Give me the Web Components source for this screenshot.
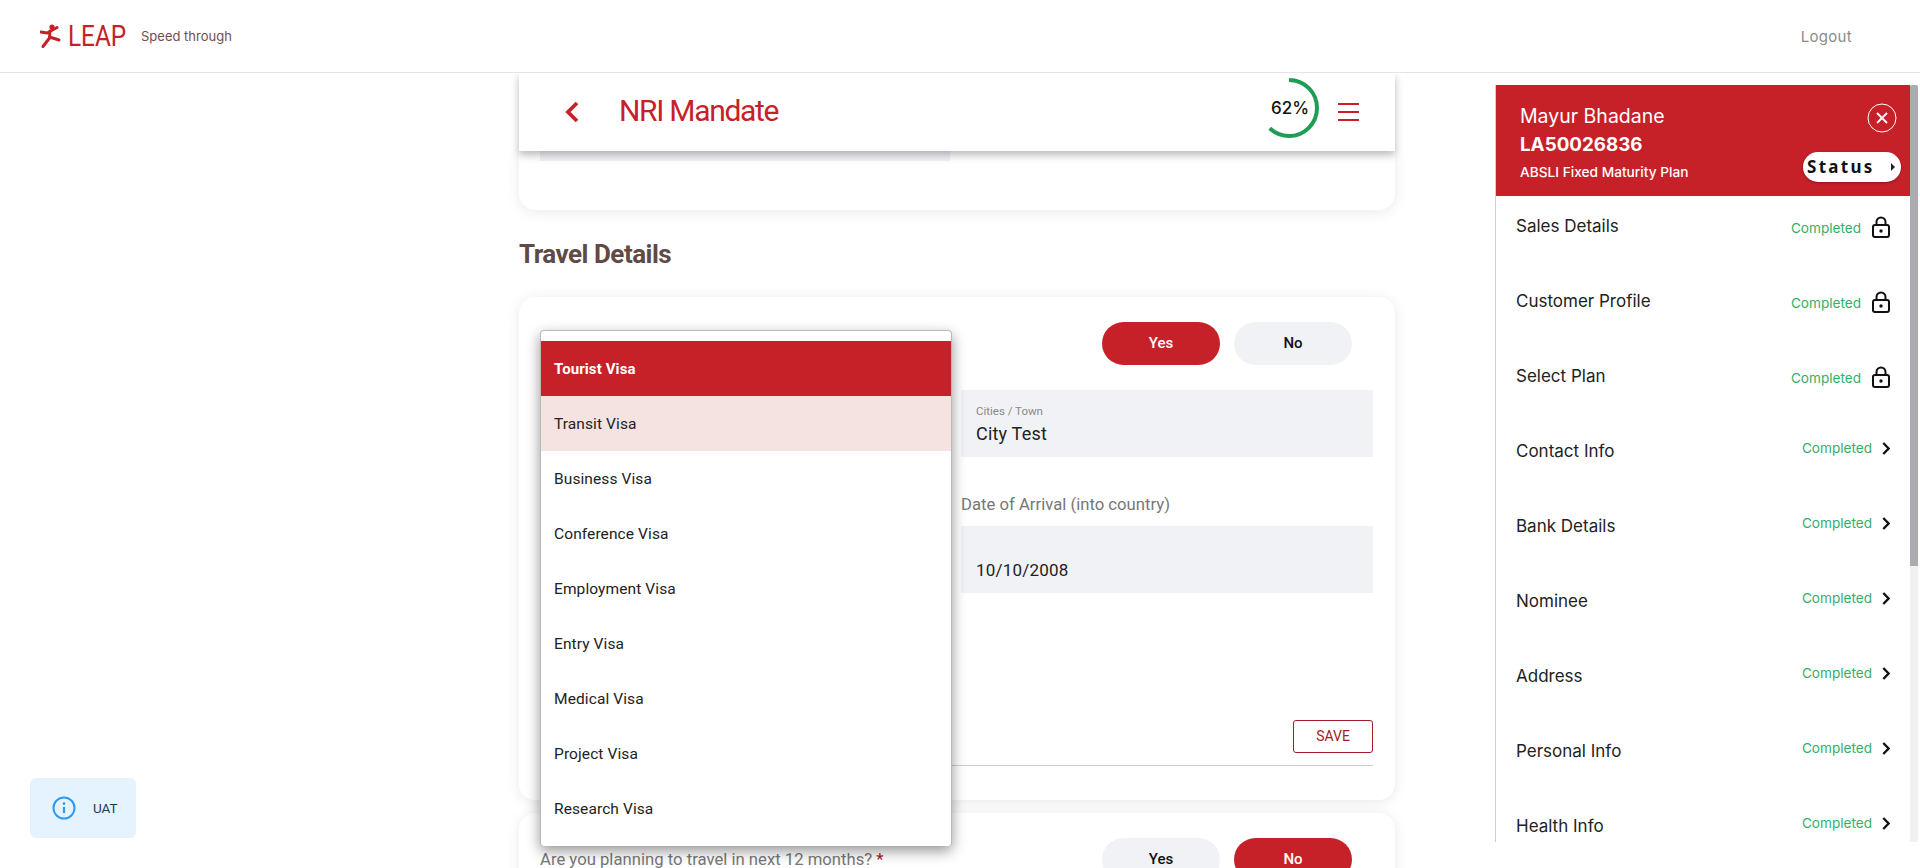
<!DOCTYPE html>
<html lang="en">
<head>
<meta charset="utf-8">
<title>LEAP - NRI Mandate</title>
<style>
  html, body { margin: 0; height: 868px; overflow: hidden; background: #fff; }
  body { font-family: Roboto, "Liberation Sans", sans-serif; position: relative; }
  .page { display: flex; align-items: flex-start; height: 795px; overflow: hidden; }
</style>
</head>
<body>
<app-header></app-header>
<div class="page">
  <mandate-column>
    <title-bar slot="bar" percent="62">NRI Mandate</title-bar>
  </mandate-column>
  <side-panel name="Mayur Bhadane" app="LA50026836" plan="ABSLI Fixed Maturity Plan">
    <step-row locked>Sales Details</step-row>
    <step-row locked>Customer Profile</step-row>
    <step-row locked>Select Plan</step-row>
    <step-row>Contact Info</step-row>
    <step-row>Bank Details</step-row>
    <step-row>Nominee</step-row>
    <step-row>Address</step-row>
    <step-row>Personal Info</step-row>
    <step-row>Health Info</step-row>
  </side-panel>
</div>
<uat-badge>UAT</uat-badge>

<script>
// shared colours
const RED = '#c62128';

class AppHeader extends HTMLElement {
  constructor() {
    super();
    this.attachShadow({ mode: 'open' });
    this.shadowRoot.innerHTML = `
      <style>
        :host { display: flex; align-items: center; height: 72px; border-bottom: 1px solid #e4e5ea; box-sizing: content-box; background: #fff; }
        .logo { display: flex; align-items: center; margin-left: 40px; width: 101px; }
        svg { display: block; flex: none; }
        .leap { display: inline-block; font: 400 29px/1 Roboto, sans-serif; color: ${RED}; margin-left: 6px; transform: scaleX(.84); transform-origin: left center; }
        .tag { font: 400 13px Inter, sans-serif; color: #6f4f4f; }
        .logout { margin-left: auto; margin-right: 68px; font: 400 15px Inter, sans-serif; color: #8b8b8b; letter-spacing: .3px; }
      </style>
      <div class="logo">
        <svg width="22" height="24" viewBox="0 0 22 24">
          <circle cx="12" cy="3" r="2.6" fill="${RED}"/>
          <path d="M1 8 L7 9 L17 3.5 M10 7 L9.5 14 L3 22.5 M9.5 13 L19 16" fill="none" stroke="${RED}" stroke-width="3" stroke-linecap="round" stroke-linejoin="round"/>
        </svg>
        <span class="leap">LEAP</span>
      </div>
      <span class="tag">Speed through</span>
      <span class="logout">Logout</span>
    `;
  }
}

class TitleBar extends HTMLElement {
  constructor() {
    super();
    this.attachShadow({ mode: 'open' });
    const pct = Number(this.getAttribute('percent'));
    const c = 2 * Math.PI * 28;
    this.shadowRoot.innerHTML = `
      <style>
        :host { display: flex; align-items: center; position: relative; z-index: 2; height: 78px; background: #fff; box-shadow: 0 4px 8px rgba(0,0,0,.28); }
        .back { margin-left: 46px; display: block; }
        h1 { margin: 0 0 0 40px; font: 400 30px Roboto, sans-serif; letter-spacing: -1.3px; color: ${RED}; position: relative; top: -2px; }
        .ring { position: relative; width: 60px; height: 60px; margin-left: auto; top: -4px; }
        .ring svg { display: block; transform: rotate(-90deg); }
        .ring span { position: absolute; inset: 0 0 0 2px; display: flex; align-items: center; justify-content: center; font: 500 17px Inter, sans-serif; color: #111; }
        .menu { display: flex; flex-direction: column; gap: 6px; width: 21px; margin: 0 36px 0 19px; }
        .menu i { display: block; height: 2px; background: ${RED}; }
      </style>
      <svg class="back" width="14" height="22" viewBox="0 0 14 22"><path d="M12 2 L3 11 L12 20" fill="none" stroke="${RED}" stroke-width="3.8"/></svg>
      <h1><slot></slot></h1>
      <div class="ring">
        <svg width="60" height="60" viewBox="0 0 60 60"><circle cx="30" cy="30" r="28" fill="none" stroke="#1f9d57" stroke-width="4" stroke-dasharray="${c * pct / 100} ${c}"/></svg>
        <span>${pct}%</span>
      </div>
      <div class="menu"><i></i><i></i><i></i></div>
    `;
  }
}

// Yes / No pair, the "value" attribute says which one is red
class PillToggle extends HTMLElement {
  constructor() {
    super();
    this.attachShadow({ mode: 'open' });
    const v = this.getAttribute('value');
    this.shadowRoot.innerHTML = `
      <style>
        :host { display: flex; gap: 14px; }
        div { width: 118px; height: 43px; border-radius: 22px; background: #f1f2f6; color: #111; display: flex; align-items: center; justify-content: center; padding-bottom: 2px; box-sizing: border-box; font: 500 15px Roboto, sans-serif; }
        .on { background: ${RED}; color: #fff; }
      </style>
      <div class="${v === 'Yes' ? 'on' : ''}">Yes</div>
      <div class="${v === 'No' ? 'on' : ''}">No</div>
    `;
  }
}

class FieldBox extends HTMLElement {
  constructor() {
    super();
    this.attachShadow({ mode: 'open' });
    const small = this.getAttribute('small');
    this.shadowRoot.innerHTML = `
      <style>
        :host { display: block; box-sizing: border-box; height: 67px; background: #f1f2f6; padding: 13px 16px 0 15px; }
        .small { font: 400 11.5px/16px Roboto, sans-serif; color: #8a8a8a; }
        .val { font: 400 17px/24px Roboto, sans-serif; color: #222; letter-spacing: .2px; }
        .val.text { font-size: 18px; margin-top: 3px; }
        .val.lone { padding-top: 19px; }
      </style>
      ${small ? `<div class="small">${small}</div>` : ''}
      <div class="val ${small ? 'text' : 'lone'}"><slot></slot></div>
    `;
  }
}

class VisaMenu extends HTMLElement {
  constructor() {
    super();
    this.attachShadow({ mode: 'open' });
    const items = ['Tourist Visa', 'Transit Visa', 'Business Visa', 'Conference Visa', 'Employment Visa', 'Entry Visa', 'Medical Visa', 'Project Visa', 'Research Visa'];
    this.shadowRoot.innerHTML = `
      <style>
        :host { display: block; position: absolute; left: 21px; top: 33px; width: 412px; box-sizing: border-box; z-index: 3; background: #fff; border: 1px solid #b9b9b9; border-bottom: 0; border-radius: 4px; padding: 10px 0; box-shadow: 0 5px 14px rgba(0,0,0,.42); }
        div { height: 55px; padding-left: 13px; display: flex; align-items: center; font: 400 15.5px Roboto, sans-serif; color: #222; letter-spacing: .1px; }
        .sel { background: ${RED}; color: #fff; font-weight: 700; font-size: 15px; }
        .hover { background: #f5e3e2; }
      </style>
      ${items.map((t, i) => `<div class="${i === 0 ? 'sel' : i === 1 ? 'hover' : ''}">${t}</div>`).join('')}
    `;
  }
}

class MandateColumn extends HTMLElement {
  constructor() {
    super();
    this.attachShadow({ mode: 'open' });
    this.shadowRoot.innerHTML = `
      <style>
        :host { display: block; flex: none; width: 876px; margin-left: 519px; padding-bottom: 10px; }
        .card { background: #fff; border-radius: 0 0 16px 16px; box-shadow: 0 2px 14px rgba(0,0,0,.09); }
        .under { height: 59px; }
        .under i { display: block; width: 410px; height: 10px; margin-left: 21px; background: #f1f2f6; }
        h2 { margin: 0; padding: 21px 0 0; height: 66px; font: 700 26px/46px Roboto, sans-serif; letter-spacing: -.5px; color: #5f4b46; }
        .travel { position: relative; height: 503px; border-radius: 16px; box-sizing: border-box; padding: 25px 22px 0 21px; }
        .row { display: flex; justify-content: flex-end; padding-right: 21px; }
        .grid { display: grid; grid-template-columns: 412px; justify-content: end; margin-top: 25px; }
        label { font: 400 16.7px/22px Roboto, sans-serif; color: #777; margin: 37px 0 10px 0; display: block; }
        .save { display: block; width: 80px; height: 33px; box-sizing: border-box; margin: 127px 0 0 auto; border: 1px solid #a51c24; border-radius: 3px; color: #a51c24; font: 400 14px/31px Roboto, sans-serif; text-align: center; }
        hr { border: 0; border-top: 1px solid #cfcfcf; margin: 12px 0 0; }
        .plan { height: 120px; margin-top: 13px; border-radius: 16px; box-sizing: border-box; padding: 25px 23px 0 21px; display: flex; justify-content: space-between; }
        .q { font: 400 16.7px/20px Roboto, sans-serif; color: #777; padding-top: 12px; }
        .q b { color: #a51c24; font-weight: 400; }
        .plan pill-toggle { margin-right: 20px; }
      </style>
      <slot name="bar"></slot>
      <section class="card under"><i></i></section>
      <h2>Travel Details</h2>
      <section class="card travel">
        <visa-menu></visa-menu>
        <div class="row"><pill-toggle value="Yes"></pill-toggle></div>
        <div class="grid">
          <field-box small="Cities / Town">City Test</field-box>
          <label>Date of Arrival (into country)</label>
          <field-box>10/10/2008</field-box>
        </div>
        <div class="save">SAVE</div>
        <hr>
      </section>
      <section class="card plan">
        <div class="q">Are you planning to travel in next 12 months? <b>*</b></div>
        <pill-toggle value="No"></pill-toggle>
      </section>
    `;
  }
}

class StepRow extends HTMLElement {
  constructor() {
    super();
    this.attachShadow({ mode: 'open' });
    const locked = this.hasAttribute('locked');
    const icon = locked
      ? `<svg width="18" height="22" viewBox="0 0 18 22"><path d="M4.5 9 V6 a4.5 4.5 0 0 1 9 0 V9" fill="none" stroke="#111" stroke-width="2"/><rect x="1" y="9" width="16" height="12" rx="2" fill="none" stroke="#111" stroke-width="2"/><circle cx="9" cy="15" r="1.7" fill="#111"/></svg>`
      : `<svg width="8" height="13" viewBox="0 0 8 13"><path d="M1.3 1 L6.6 6.5 L1.3 12" fill="none" stroke="#111" stroke-width="2.4"/></svg>`;
    this.shadowRoot.innerHTML = `
      <style>
        :host { display: flex; height: 75px; box-sizing: border-box; padding: 20px 20px 0 20px; align-items: flex-start; }
        .name { font: 400 17px/20px Inter, sans-serif; color: #222; }
        .status { margin-left: auto; font: 400 13.6px/20px Inter, sans-serif; color: #35ae68; position: relative; top: ${locked ? 2 : -3}px; }
        svg { display: block; flex: none; margin-left: ${locked ? 11 : 10}px; position: relative; top: ${locked ? 0 : 1}px; }
      </style>
      <span class="name"><slot></slot></span>
      <span class="status">Completed</span>
      ${icon}
    `;
  }
}

class SidePanel extends HTMLElement {
  constructor() {
    super();
    this.attachShadow({ mode: 'open' });
    const a = (n) => this.getAttribute(n);
    this.shadowRoot.innerHTML = `
      <style>
        :host { display: flex; flex: none; width: 423px; height: 757px; margin: 12px 0 0 100px; box-sizing: border-box; border-left: 1px solid #cfcfcf; background: #fff; position: relative; z-index: 4; }
        .main { width: 414px; height: 100%; overflow: hidden; }
        .head { position: relative; height: 111px; background: ${RED}; color: #fff; padding: 19px 0 0 24px; box-sizing: border-box; }
        .name { font: 400 19.5px/24px Inter, sans-serif; }
        .app { font: 700 18.8px/30px Inter, sans-serif; margin-top: 2px; }
        .plan { font: 500 13.7px/22px Inter, sans-serif; margin-top: 1px; }
        .close { position: absolute; right: 13px; top: 18px; display: block; }
        .status { position: absolute; left: 307px; top: 67px; width: 98px; height: 30px; border-radius: 15px; background: #fff; box-shadow: 0 1px 3px rgba(0,0,0,.3); color: #111; font: 700 17px/29px "Noto Sans", sans-serif; padding-left: 4px; box-sizing: border-box; letter-spacing: 2.3px; }
        .status i { position: absolute; right: 6px; top: 11px; width: 0; height: 0; border-left: 4px solid #222; border-top: 4px solid transparent; border-bottom: 4px solid transparent; }
        .bar { width: 8px; margin-left: 0; background: #f1f1f1; }
        .bar i { display: block; height: 481px; background: #abacb0; border-radius: 2px 2px 0 0; }
      </style>
      <div class="main">
        <div class="head">
          <div class="name">${a('name')}</div>
          <div class="app">${a('app')}</div>
          <div class="plan">${a('plan')}</div>
          <svg class="close" width="30" height="30" viewBox="0 0 30 30"><circle cx="15" cy="15" r="14" fill="none" stroke="#fff"/><path d="M10 10 L20 20 M20 10 L10 20" stroke="#fff" stroke-width="1.8"/></svg>
          <div class="status">Status<i></i></div>
        </div>
        <slot></slot>
      </div>
      <div class="bar"><i></i></div>
    `;
  }
}

class UatBadge extends HTMLElement {
  constructor() {
    super();
    this.attachShadow({ mode: 'open' });
    this.shadowRoot.innerHTML = `
      <style>
        :host { position: absolute; left: 30px; top: 778px; width: 106px; height: 60px; box-sizing: border-box; padding-left: 22px; display: flex; align-items: center; background: #e5f3fe; border-radius: 6px; font: 400 13.5px Roboto, sans-serif; color: #1d3b55; }
        svg { display: block; margin-right: 17px; }
      </style>
      <svg width="24" height="24" viewBox="0 0 24 24"><circle cx="12" cy="12" r="10.5" fill="none" stroke="#2f9bf0" stroke-width="2"/><circle cx="12" cy="7.6" r="1.3" fill="#2f9bf0"/><path d="M12 11 V17" stroke="#2f9bf0" stroke-width="2.2"/></svg>
      <slot></slot>
    `;
  }
}

// children first so the parents find them ready
customElements.define('app-header', AppHeader);
customElements.define('title-bar', TitleBar);
customElements.define('pill-toggle', PillToggle);
customElements.define('field-box', FieldBox);
customElements.define('visa-menu', VisaMenu);
customElements.define('mandate-column', MandateColumn);
customElements.define('step-row', StepRow);
customElements.define('side-panel', SidePanel);
customElements.define('uat-badge', UatBadge);
</script>
</body>
</html>
